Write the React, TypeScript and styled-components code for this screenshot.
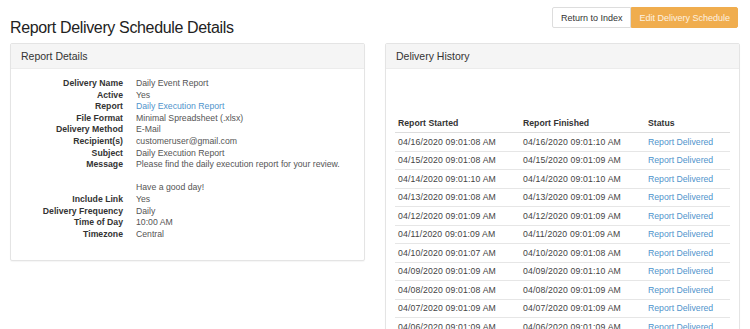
import React from "react";
import styled, { createGlobalStyle } from "styled-components";

const GlobalStyle = createGlobalStyle`
  html, body {
    margin: 0;
    padding: 0;
    background: #ffffff;
    font-family: "Liberation Sans", Arial, sans-serif;
    color: #333333;
  }
`;

const Page = styled.div`
  width: 750px;
  height: 329px;
  overflow: hidden;
  padding: 7px 10px 0 10px;
  box-sizing: border-box;
`;

const TopBar = styled.div`
  display: flex;
  justify-content: space-between;
  align-items: flex-start;
  height: 36px;
`;

const Title = styled.h1`
  margin: 12px 0 0 0;
  font-size: 16px;
  letter-spacing: -0.35px;
  font-weight: 400;
  color: #222;
  line-height: 18px;
`;

const ButtonGroup = styled.div`
  display: flex;
  margin-right: 2px;
`;

const Button = styled.button<{ $primary?: boolean }>`
  font-family: inherit;
  font-size: 9px;
  height: 21px;
  padding: 0 ${(p) => (p.$primary ? "7px" : "8px")};
  border: 1px solid ${(p) => (p.$primary ? "#f0ad4e" : "#dddddd")};
  background: ${(p) => (p.$primary ? "#f0ad4e" : "#ffffff")};
  color: ${(p) => (p.$primary ? "#fdf2e1" : "#333")};
  border-radius: ${(p) => (p.$primary ? "0 2px 2px 0" : "2px 0 0 2px")};
  cursor: pointer;
`;

const Columns = styled.div`
  display: grid;
  grid-template-columns: 355px 355px;
  column-gap: 20px;
  align-items: start;
`;

const Panel = styled.div<{ $tall?: boolean }>`
  border: 1px solid #e4e4e4;
  border-radius: 2px;
  box-shadow: 0 1px 1px rgba(0, 0, 0, 0.04);
  height: ${(p) => (p.$tall ? "400px" : "auto")};
`;

const PanelHeading = styled.div`
  background: #f5f5f5;
  border-bottom: 1px solid #ececec;
  height: 24px;
  padding: 0 10px;
  display: flex;
  align-items: center;
  font-size: 10.5px;
  color: #333;
`;

const DetailBody = styled.div`
  padding: 9px 0 20px 0;
`;

const DetailList = styled.dl`
  margin: 0;
  display: grid;
  grid-template-columns: 112px 1fr;
  column-gap: 13px;
  font-size: 8.7px;
  line-height: 11.6px;
`;

const Term = styled.dt`
  text-align: right;
  font-weight: 700;
  color: #333;
`;

const Desc = styled.dd`
  margin: 0;
  color: #555;
  white-space: pre-line;
`;

const Link = styled.a`
  color: #4f94cc;
  text-decoration: none;
`;

const HistoryBody = styled.div`
  padding: 45px 9px 0 9px;
`;

const Table = styled.table`
  width: 100%;
  border-collapse: collapse;
  font-size: 8.7px;
`;

const Th = styled.th<{ $w?: number }>`
  text-align: left;
  font-weight: 700;
  color: #333;
  height: 18px;
  padding: 0 3px;
  border-bottom: 1px solid #dddddd;
  width: ${(p) => (p.$w ? `${p.$w}px` : "auto")};
`;

const Td = styled.td`
  height: 17.5px;
  padding: 0 3px;
  color: #444;
  border-bottom: 1px solid #e6e6e6;
  white-space: nowrap;
`;

const DateCell = styled(Td)`
  letter-spacing: 0.15px;
`;

const details: [string, React.ReactNode][] = [
  ["Delivery Name", "Daily Event Report"],
  ["Active", "Yes"],
  ["Report", <Link href="#">Daily Execution Report</Link>],
  ["File Format", "Minimal Spreadsheet (.xlsx)"],
  ["Delivery Method", "E-Mail"],
  ["Recipient(s)", "customeruser@gmail.com"],
  ["Subject", "Daily Execution Report"],
  [
    "Message",
    "Please find the daily execution report for your review.\n\nHave a good day!",
  ],
  ["Include Link", "Yes"],
  ["Delivery Frequency", "Daily"],
  ["Time of Day", "10:00 AM"],
  ["Timezone", "Central"],
];

const history: [string, string][] = [
  ["04/16/2020 09:01:08 AM", "04/16/2020 09:01:10 AM"],
  ["04/15/2020 09:01:08 AM", "04/15/2020 09:01:09 AM"],
  ["04/14/2020 09:01:10 AM", "04/14/2020 09:01:10 AM"],
  ["04/13/2020 09:01:08 AM", "04/13/2020 09:01:09 AM"],
  ["04/12/2020 09:01:09 AM", "04/12/2020 09:01:09 AM"],
  ["04/11/2020 09:01:09 AM", "04/11/2020 09:01:09 AM"],
  ["04/10/2020 09:01:07 AM", "04/10/2020 09:01:08 AM"],
  ["04/09/2020 09:01:09 AM", "04/09/2020 09:01:10 AM"],
  ["04/08/2020 09:01:08 AM", "04/08/2020 09:01:09 AM"],
  ["04/07/2020 09:01:09 AM", "04/07/2020 09:01:09 AM"],
  ["04/06/2020 09:01:09 AM", "04/06/2020 09:01:09 AM"],
];

export default function App() {
  return (
    <>
      <GlobalStyle />
      <Page>
        <TopBar>
          <Title>Report Delivery Schedule Details</Title>
          <ButtonGroup>
            <Button>Return to Index</Button>
            <Button $primary>Edit Delivery Schedule</Button>
          </ButtonGroup>
        </TopBar>
        <Columns>
          <Panel>
            <PanelHeading>Report Details</PanelHeading>
            <DetailBody>
              <DetailList>
                {details.map(([label, value]) => (
                  <React.Fragment key={label}>
                    <Term>{label}</Term>
                    <Desc>{value}</Desc>
                  </React.Fragment>
                ))}
              </DetailList>
            </DetailBody>
          </Panel>
          <Panel $tall>
            <PanelHeading>Delivery History</PanelHeading>
            <HistoryBody>
              <Table>
                <thead>
                  <tr>
                    <Th $w={119}>Report Started</Th>
                    <Th $w={119}>Report Finished</Th>
                    <Th>Status</Th>
                  </tr>
                </thead>
                <tbody>
                  {history.map(([started, finished]) => (
                    <tr key={started}>
                      <DateCell>{started}</DateCell>
                      <DateCell>{finished}</DateCell>
                      <Td>
                        <Link href="#">Report Delivered</Link>
                      </Td>
                    </tr>
                  ))}
                </tbody>
              </Table>
            </HistoryBody>
          </Panel>
        </Columns>
      </Page>
    </>
  );
}
